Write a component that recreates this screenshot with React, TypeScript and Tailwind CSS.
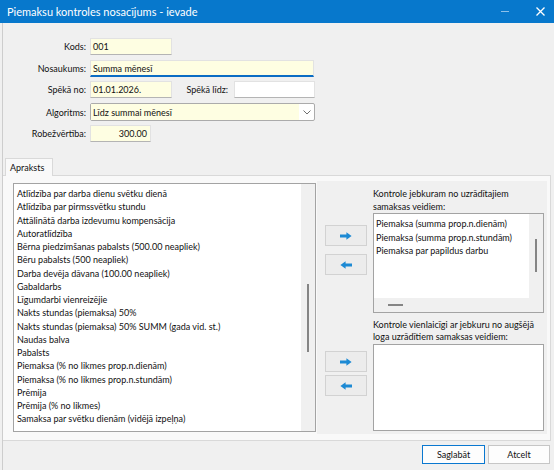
const leftItems = [
  "Atlīdzība par darba dienu svētku dienā",
  "Atlīdzība par pirmssvētku stundu",
  "Attālinātā darba izdevumu kompensācija",
  "Autoratlīdzība",
  "Bērna piedzimšanas pabalsts (500.00 neapliek)",
  "Bēru pabalsts (500 neapliek)",
  "Darba devēja dāvana (100.00 neapliek)",
  "Gabaldarbs",
  "Līgumdarbi vienreizējie",
  "Nakts stundas (piemaksa) 50%",
  "Nakts stundas (piemaksa) 50% SUMM (gada vid. st.)",
  "Naudas balva",
  "Pabalsts",
  "Piemaksa (% no likmes prop.n.dienām)",
  "Piemaksa (% no likmes prop.n.stundām)",
  "Prēmija",
  "Prēmija (% no likmes)",
  "Samaksa par svētku dienām (vidējā izpeļņa)",
];

const selectedItems = [
  "Piemaksa (summa prop.n.dienām)",
  "Piemaksa (summa prop.n.stundām)",
  "Piemaksa par papildus darbu",
];

function Arrow({ left }: { left?: boolean }) {
  return (
    <svg
      width="12"
      height="8"
      viewBox="0 0 12 8"
      className={left ? "rotate-180" : ""}
    >
      <path d="M0 2.6H6.4V0.2L11.6 4L6.4 7.8V5.4H0Z" fill="#1d8ad4" />
    </svg>
  );
}

function ArrowButton({ left }: { left?: boolean }) {
  return (
    <div className="flex h-[21px] w-[42px] items-center justify-center border border-[#d2d2d2] bg-[#ececec]">
      <Arrow left={left} />
    </div>
  );
}

function Label({ children, w = "w-[83px]" }: { children: string; w?: string }) {
  return <div className={`${w} shrink-0 text-right`}>{children}</div>;
}

const inputCls =
  "h-[17px] border border-[#e2e2e2] border-b-[#b4b4b4] pl-[2px] flex items-center";

export default function App() {
  return (
    <div className="flex h-[470px] w-[554px] flex-col overflow-hidden bg-[#f0f0f0] font-['Lato','Liberation_Sans',sans-serif] text-[9px] leading-none text-[#111]">
      {/* title */}
      <div className="flex h-[23px] shrink-0 items-center bg-[#0778cc] pl-[7px] text-[11px] text-white">
        <span className="flex-1">Piemaksu kontroles nosacījums - ievade</span>
        <div className="h-px w-[8px] bg-[#8cc0ea]" />
        <svg width="9" height="9" viewBox="0 0 9 9" className="ml-[27px] mr-[9px]">
          <path d="M0.5 0.5L8.5 8.5M8.5 0.5L0.5 8.5" stroke="white" strokeWidth="1.3" />
        </svg>
      </div>

      <div className="ml-[2px] flex flex-1 flex-col border-l border-[#cdcdcd]">
        {/* form */}
        <div className="flex flex-col pt-[15px]">
          <div className="flex items-center gap-[4px]">
            <Label>Kods:</Label>
            <div className={`${inputCls} w-[82px] bg-[#fefee2]`}>001</div>
          </div>
          <div className="mt-[5px] flex items-center gap-[4px]">
            <Label>Nosaukums:</Label>
            <div className="flex h-[17px] w-[224px] items-center border border-[#e2e2e2] border-b-2 border-b-[#0a6cc4] bg-[#fefee2] pl-[2px]">
              Summa mēnesī
            </div>
          </div>
          <div className="mt-[4px] flex items-center gap-[4px]">
            <Label>Spēkā no:</Label>
            <div className={`${inputCls} w-[82px] bg-[#fefee2]`}>01.01.2026.</div>
            <div className="ml-[9px] w-[43px] shrink-0 text-right">Spēkā līdz:</div>
            <div className={`${inputCls} ml-[2px] w-[81px] bg-white`} />
          </div>
          <div className="mt-[5px] flex items-center gap-[4px]">
            <Label>Algoritms:</Label>
            <div className="flex h-[18px] w-[225px] rounded-[2px] border border-[#ababab] bg-white">
              <div className="flex flex-1 items-center bg-[#fefee2] pl-[2px]">
                Līdz summai mēnesī
              </div>
              <div className="flex w-[15px] items-center justify-center">
                <svg width="8" height="5" viewBox="0 0 8 5">
                  <path d="M0.5 0.5L4 4L7.5 0.5" stroke="#707070" fill="none" strokeWidth="1" />
                </svg>
              </div>
            </div>
          </div>
          <div className="mt-[4px] flex items-center gap-[4px]">
            <Label>Robežvērtība:</Label>
            <div className={`${inputCls} w-[61px] justify-end bg-[#fefee2] pr-[3px]`}>300.00</div>
          </div>
        </div>

        {/* tab strip */}
        <div className="mt-[16px] flex pl-[2px]">
          <div className="relative z-10 -mb-px flex h-[18px] w-[48px] items-center border border-b-0 border-[#d9d9d9] bg-[#f9f9f9] pl-[4px]">
            Apraksts
          </div>
        </div>

        {/* tab panel */}
        <div className="flex h-[266px] w-[548px] items-start border-r border-t border-b border-[#d9d9d9] bg-[#f9f9f9] pl-[10px] pt-[5px]">
          {/* available list */}
          <div className="mt-[2px] flex h-[249px] w-[303px] border border-[#a3a3a3] bg-white">
            <div className="flex-1 pl-[3px] pt-[3px] leading-[13.25px]">
              {leftItems.map((t) => (
                <div key={t} className="whitespace-nowrap">
                  {t}
                </div>
              ))}
            </div>
            <div className="flex w-[14px] flex-col items-center bg-[#f0f0f0]">
              <div className="mt-[100px] h-[68px] w-[2px] bg-[#858585]" />
            </div>
          </div>

          {/* right group */}
          <div className="ml-px flex h-[253px] w-[230px] bg-[#f0f0f0]">
            <div className="ml-[8px] flex w-[42px] flex-col pt-[44px]">
              <ArrowButton />
              <div className="mt-[8px]">
                <ArrowButton left />
              </div>
              <div className="mt-[76px]">
                <ArrowButton />
              </div>
              <div className="mt-[3px]">
                <ArrowButton left />
              </div>
            </div>

            <div className="ml-[6px] flex w-[171px] flex-col pt-[6px]">
              <div className="leading-[13px]">
                Kontrole jebkuram no uzrādītajiem
                <br />
                samaksas veidiem:
              </div>
              <div className="grid h-[100px] grid-cols-[1fr_14px] grid-rows-[1fr_14px] border border-[#a3a3a3] bg-[#f0f0f0]">
                <div className="bg-white pl-[2px] pt-[3px] leading-[13.5px]">
                  {selectedItems.map((t) => (
                    <div key={t} className="whitespace-nowrap">
                      {t}
                    </div>
                  ))}
                </div>
                <div className="flex flex-col items-center">
                  <div className="mt-[25px] h-[33px] w-[2px] bg-[#858585]" />
                </div>
                <div className="flex items-center">
                  <div className="ml-[14px] h-[2px] w-[15px] bg-[#858585]" />
                </div>
                <div />
              </div>
              <div className="mt-[6px] leading-[12px]">
                Kontrole vienlaicīgi ar jebkuru no augšējā
                <br />
                loga uzrādītiem samaksas veidiem:
              </div>
              <div className="mt-[1px] h-[87px] border border-[#a3a3a3] bg-white" />
            </div>
          </div>
        </div>

        {/* footer */}
        <div className="flex flex-1 items-start justify-end gap-[3px] pr-[4px] pt-[4px]">
          <div className="flex h-[19px] w-[63px] items-center justify-center border border-[#0a78d0] bg-[#fdfdfd]">
            Saglabāt
          </div>
          <div className="flex h-[19px] w-[62px] items-center justify-center border border-[#c6c6c6] bg-[#fdfdfd]">
            Atcelt
          </div>
        </div>
      </div>
    </div>
  );
}
